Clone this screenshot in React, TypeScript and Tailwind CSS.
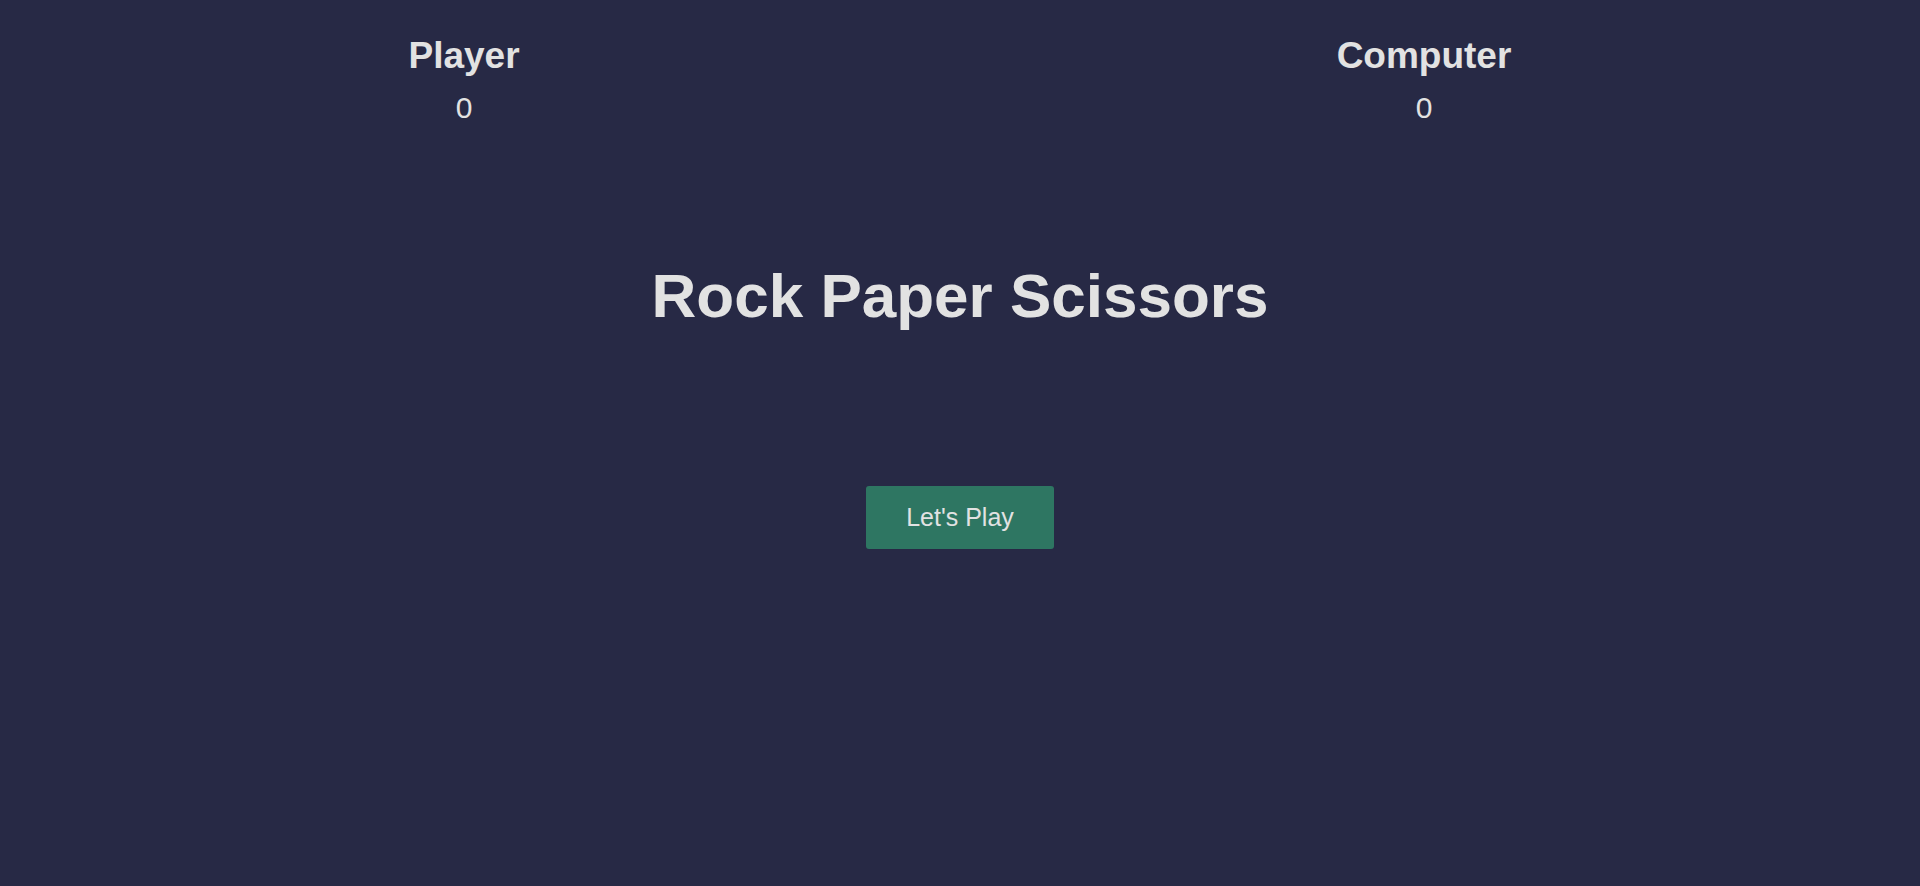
import React, { FC, useState } from "react";

const ScoreBox: FC<{ label: string; score: number }> = ({ label, score }) => {
  return (
    <div className="flex flex-col items-center">
      <h2 className="text-[37px] font-bold leading-[42px]">{label}</h2>
      <p className="mt-[14px] text-[30px] leading-[34px]">{score}</p>
    </div>
  );
};

const App: FC = () => {
  const [playerScore] = useState(0);
  const [computerScore] = useState(0);

  return (
    <div
      className="min-h-[886px] w-full bg-[#272945] text-[#e2e2e2]"
      style={{ fontFamily: '"Liberation Sans", Arial, sans-serif' }}
    >
      {/* スコア */}
      <div className="grid grid-cols-[928px_1fr] pt-[35px]">
        <ScoreBox label="Player" score={playerScore} />
        <ScoreBox label="Computer" score={computerScore} />
      </div>

      {/* タイトル */}
      <h1 className="mt-[134px] text-center text-[62px] font-bold leading-[74px]">Rock Paper Scissors</h1>

      <div className="mt-[153px] flex justify-center">
        <button className="h-[63px] w-[188px] cursor-pointer rounded-[3px] bg-[#2e7662] text-[25px] text-[#e2e2e2]">
          Let's Play
        </button>
      </div>
    </div>
  );
};

export default App;
